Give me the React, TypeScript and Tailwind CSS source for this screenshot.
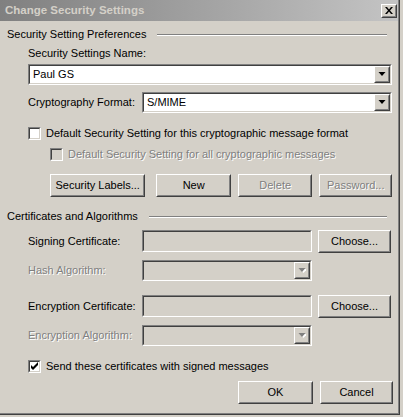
const FACE = "bg-[#d4d0c8]";

const Sunken = ({
  className = "",
  inner = "bg-white",
  children,
}: {
  className?: string;
  inner?: string;
  children?: React.ReactNode;
}) => (
  <div
    className={`border border-t-[#808080] border-l-[#808080] border-r-white border-b-white ${className}`}
  >
    <div
      className={`h-full w-full border border-t-[#404040] border-l-[#404040] border-r-[#d4d0c8] border-b-[#d4d0c8] flex items-center ${inner}`}
    >
      {children}
    </div>
  </div>
);

const Raised = ({
  className = "",
  children,
}: {
  className?: string;
  children?: React.ReactNode;
}) => (
  <div
    className={`border border-t-white border-l-white border-r-[#404040] border-b-[#404040] ${FACE} ${className}`}
  >
    <div className="h-full w-full border border-t-[#d4d0c8] border-l-[#d4d0c8] border-r-[#808080] border-b-[#808080] flex items-center justify-center">
      {children}
    </div>
  </div>
);

const Arrow = ({ disabled = false }: { disabled?: boolean }) => (
  <svg width="8" height="5" viewBox="0 0 8 5">
    {disabled && <path d="M2 1h7L5.5 5z" fill="#ffffff" />}
    <path d="M0.5 0h7L4 4z" fill={disabled ? "#808080" : "#000000"} />
  </svg>
);

const Combo = ({
  className = "",
  value = "",
  disabled = false,
}: {
  className?: string;
  value?: string;
  disabled?: boolean;
}) => (
  <Sunken className={`h-[21px] ${className}`} inner={disabled ? FACE : "bg-white"}>
    <span className="flex-1 pl-[3px] text-black">{value}</span>
    <Raised className="h-[17px] w-[16px]">
      <Arrow disabled={disabled} />
    </Raised>
  </Sunken>
);

const Btn = ({
  label,
  className = "",
  disabled = false,
}: {
  label: string;
  className?: string;
  disabled?: boolean;
}) => (
  <Raised className={`h-[23px] ${className}`}>
    <span className={disabled ? "text-[#808080] [text-shadow:1px_1px_0_#ffffff]" : "text-black"}>
      {label}
    </span>
  </Raised>
);

const Check = ({
  checked = false,
  disabled = false,
}: {
  checked?: boolean;
  disabled?: boolean;
}) => (
  <Sunken className="h-[13px] w-[13px] shrink-0" inner={disabled ? FACE : "bg-white"}>
    {checked && (
      <svg width="9" height="9" viewBox="0 0 9 9" className="mx-auto">
        <path d="M1 3v3l2 2 5-5V0L3 5z" fill="#000000" />
      </svg>
    )}
  </Sunken>
);

const Group = ({ title }: { title: string }) => (
  <div className="flex items-center h-[13px] pl-[7px] pr-[11px]">
    <span>{title}</span>
    <div className="flex-1 ml-[11px] border-t border-t-[#808080] border-b border-b-white" />
  </div>
);

const dim = "text-[#808080] [text-shadow:1px_1px_0_#ffffff]";

export default function App() {
  return (
    <div
      className={`w-[403px] h-[417px] ${FACE} text-[11px] leading-[13px] text-black`}
      style={{ fontFamily: '"Liberation Sans", Arial, sans-serif' }}
    >
      <div className="w-[400px] h-[415px] border-r border-b border-[#404040]">
        <div className="h-full w-full border-r border-b border-[#808080] flex flex-col">
          {/* title bar */}
          <div className="h-[21px] bg-linear-to-r from-[#808080] to-[#c4c4c4] flex items-center pl-[5px] pr-[1px]">
            <span className="flex-1 font-bold text-[11.5px] text-[#d4d0c8]">
              Change Security Settings
            </span>
            <Raised className="w-[16px] h-[14px]">
              <svg width="8" height="7" viewBox="0 0 8 7">
                <path d="M0 0h2l2 2.5L6 0h2L5 3.5 8 7H6L4 4.5 2 7H0l3-3.5z" fill="#000000" />
              </svg>
            </Raised>
          </div>

          <div className="mt-[7px]">
            <Group title="Security Setting Preferences" />
          </div>

          <div className="pl-[28px] pr-[6px]">
            <div className="mt-[6px] h-[13px]">Security Settings Name:</div>
            <Combo className="mt-[4px] w-[364px]" value="Paul GS" />

            <div className="mt-[7px] flex items-center w-[364px]">
              <span className="w-[114px]">Cryptography Format:</span>
              <Combo className="flex-1" value="S/MIME" />
            </div>

            <div className="mt-[14px] flex items-center gap-[5px]">
              <Check />
              <span>Default Security Setting for this cryptographic message format</span>
            </div>

            <div className="mt-[8px] ml-[22px] flex items-center gap-[5px]">
              <Check disabled />
              <span className={dim}>Default Security Setting for all cryptographic messages</span>
            </div>

            <div className="mt-[13px] ml-[22px] flex gap-[7px]">
              <Btn label="Security Labels..." className="w-[96px] mr-[4px]" />
              <Btn label="New" className="w-[75px]" />
              <Btn label="Delete" className="w-[75px]" disabled />
              <Btn label="Password..." className="w-[73px]" disabled />
            </div>
          </div>

          <div className="mt-[13px]">
            <Group title="Certificates and Algorithms" />
          </div>

          <div className="pl-[28px]">
            <div className="mt-[7px] flex items-center h-[23px]">
              <span className="w-[114px]">Signing Certificate:</span>
              <Sunken className="w-[170px] h-[22px] self-start" inner={FACE} />
              <Btn label="Choose..." className="ml-[6px] w-[73px]" />
            </div>

            <div className="mt-[7px] flex items-center h-[21px]">
              <span className={`w-[114px] ${dim}`}>Hash Algorithm:</span>
              <Combo className="w-[170px]" disabled />
            </div>

            <div className="mt-[14px] flex items-center h-[23px]">
              <span className="w-[114px]">Encryption Certificate:</span>
              <Sunken className="w-[170px] h-[22px] self-start" inner={FACE} />
              <Btn label="Choose..." className="ml-[6px] w-[73px]" />
            </div>

            <div className="mt-[7px] flex items-center h-[21px]">
              <span className={`w-[114px] ${dim}`}>Encryption Algorithm:</span>
              <Combo className="w-[170px]" disabled />
            </div>

            <div className="mt-[14px] flex items-center gap-[5px]">
              <Check checked />
              <span>Send these certificates with signed messages</span>
            </div>

            <div className="mt-[8px] ml-[210px] flex gap-[7px]">
              <Btn label="OK" className="w-[75px]" />
              <Btn label="Cancel" className="w-[73px]" />
            </div>
          </div>
        </div>
      </div>
    </div>
  );
}
